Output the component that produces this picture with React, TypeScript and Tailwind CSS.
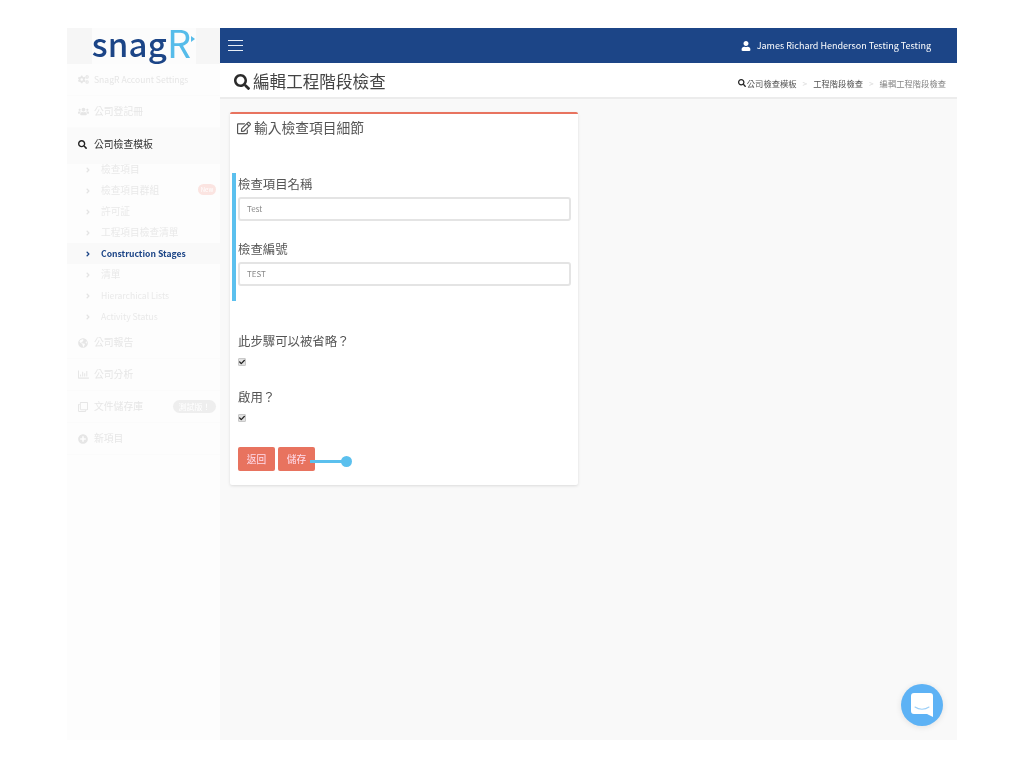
import { FaCogs, FaUsers, FaSearch, FaGlobeAmericas, FaRegChartBar, FaRegClone, FaPlusCircle, FaRegEdit, FaUser, FaCheck, FaAngleRight } from "react-icons/fa";

const font = "font-['Noto_Sans_CJK_TC','Noto_Sans',sans-serif]";

const subItems = ["檢查項目", "檢查項目群組", "許可証", "工程項目檢查清單", "Construction Stages", "清單", "Hierarchical Lists", "Activity Status"];

function SubItem({ label }: { label: string }) {
  const active = label === "Construction Stages";
  const latin = /^[A-Z]/.test(label);
  return (
    <div className={`relative flex h-[21px] items-center pl-[17px] ${latin ? "text-[8.6px]" : "text-[9.7px]"} ${active ? "bg-[#f9f9f9] font-semibold text-[#1c4587]" : "text-[#e9e9e9]"}`}>
      <FaAngleRight size={8} className={active ? "text-[#1c4587]" : "text-[#e4e4e4]"} />
      <span className="ml-[9px]">{label}</span>
      {label === "檢查項目群組" && (
        <span className="absolute right-[4px] top-[4px] flex h-[11px] w-[18px] items-center justify-center rounded-full bg-[#fbe4e1] text-[6px] text-white">New</span>
      )}
    </div>
  );
}

function NavItem({ icon, label, badge, small }: { icon: React.ReactNode; label: string; badge?: string; small?: boolean }) {
  return (
    <div className={`flex h-[32px] items-center border-b border-[#fbfbfb] pl-[11px] pr-[4px] text-[#e6e6e6] ${small ? "text-[8.6px]" : "text-[9.8px]"}`}>
      <span className="flex w-[16px] text-[#e6e6e6]">{icon}</span>
      <span>{label}</span>
      {badge && <span className="ml-auto flex h-[13px] w-[43px] items-center justify-center rounded-full bg-[#eeeeee] text-[8px] text-white">{badge}</span>}
    </div>
  );
}

function Checked() {
  return (
    <span className="flex h-[8px] w-[8px] items-center justify-center rounded-[1px] border border-[#c8c8c8] bg-[#e2e2e2]">
      <FaCheck size={6} className="text-[#222]" />
    </span>
  );
}

export default function App() {
  return (
    <div className={`${font} h-[768px] w-[1024px] overflow-hidden bg-white px-[67px] py-[28px] blur-[0.35px]`}>
      <div className="flex h-[712px] w-[890px]">
        {/* sidebar */}
        <aside className="w-[153px] shrink-0 bg-[#fdfdfd]">
          <div className="flex h-[36px] justify-center bg-[#f6f6f6]">
            <div className="flex w-[104px] items-end justify-center bg-[#fcfcfc] pb-[3px] text-[#1c4587]">
              <span className="text-[33px] font-medium leading-[36px] tracking-[0.2px]">snag</span>
              <span className="text-[38px] font-normal leading-[38px] text-[#56bcea]">R</span>
              <span className="mb-[19px] h-0 w-0 border-y-[3px] border-l-[4px] border-y-transparent border-l-[#56bcea]" />
            </div>
          </div>
          <NavItem icon={<FaCogs size={11} />} label="SnagR Account Settings" small />
          <NavItem icon={<FaUsers size={11} />} label="公司登記冊" />
          <div className="flex h-[36px] items-center bg-[#fafafa] pb-[4px] pl-[11px] text-[9.8px] text-[#333]">
            <FaSearch size={9} className="mr-[7px] text-[#222]" />
            公司檢查模板
          </div>
          <div className="relative -mt-[5px]">
            {subItems.map((s) => (
              <SubItem key={s} label={s} />
            ))}
          </div>
          <NavItem icon={<FaGlobeAmericas size={10} />} label="公司報告" />
          <NavItem icon={<FaRegChartBar size={11} />} label="公司分析" />
          <NavItem icon={<FaRegClone size={10} />} label="文件儲存庫" badge="測試版！" />
          <NavItem icon={<FaPlusCircle size={10} />} label="新項目" />
        </aside>

        {/* main column */}
        <main className="relative flex min-w-0 flex-1 flex-col bg-[#f9f9f9]">
          <header className="flex h-[35px] shrink-0 items-center bg-[#1c4587] pl-[8px] pr-[26px] text-white">
            <div className="flex w-[15px] flex-col gap-[3.5px]">
              <span className="h-[1.5px] bg-[#e8eef6]" />
              <span className="h-[1.5px] bg-[#e8eef6]" />
              <span className="h-[1.5px] bg-[#e8eef6]" />
            </div>
            <div className="ml-auto flex items-center text-[9px] text-white">
              <FaUser size={10} className="mr-[6px]" />
              <span className="blur-[0.6px]">James Richard Henderson Testing Testing</span>
            </div>
          </header>

          <div className="flex h-[36px] shrink-0 items-center border-b-2 border-[#ececec] bg-white pl-[14px] pr-[11px]">
            <FaSearch size={16} className="mt-[3px] text-[#2b2b2b]" />
            <h1 className="ml-[3px] pt-[2px] text-[16.6px] font-normal text-[#444]">編輯工程階段檢查</h1>
            <div className="ml-auto flex items-center pt-[6px] text-[8.3px] text-[#555]">
              <FaSearch size={8} className="mr-[1px] text-[#222]" />
              公司檢查模板
              <span className="mx-[6px] text-[#ddd]">&gt;</span>
              工程階段檢查
              <span className="mx-[6px] text-[#ddd]">&gt;</span>
              <span className="text-[#888]">編輯工程階段檢查</span>
            </div>
          </div>

          <div className="px-[10px] pt-[13px]">
            <section className="h-[373px] w-[348px] rounded-[2px] border-t-2 border-[#e8735f] bg-white pt-[3px] shadow-[0_1px_3px_rgba(0,0,0,0.12)]">
              <h2 className="flex h-[21px] items-center pl-[7px] text-[13.75px] font-normal text-[#555]">
                <FaRegEdit size={14} className="mr-[3px] text-[#555]" />
                輸入檢查項目細節
              </h2>
              <div className="ml-[2px] mt-[35px] h-[128px] w-[344px] border-l-[4px] border-[#5bc0ee] pl-[2px] pr-[5px] pt-[2px]">
                <label className="block h-[22px] text-[12.4px] leading-[18px] text-[#555]">檢查項目名稱</label>
                <div className="flex h-[24px] items-center rounded-[3px] border-2 border-[#e4e4e4] pl-[7px] text-[8px] text-[#888]">Test</div>
                <label className="mt-[19px] block h-[22px] text-[12.4px] leading-[18px] text-[#555]">檢查編號</label>
                <div className="flex h-[24px] items-center rounded-[3px] border-2 border-[#e4e4e4] pl-[7px] text-[8px] text-[#888]">TEST</div>
              </div>
              <div className="pl-[8px] pt-[29px]">
                <div className="h-[22px] text-[12.4px] leading-[22px] text-[#555]">此步驟可以被省略？</div>
                <div className="mt-[6px] flex"><Checked /></div>
                <div className="mt-[20px] h-[22px] text-[12.4px] leading-[22px] text-[#555]">啟用？</div>
                <div className="mt-[6px] flex"><Checked /></div>
                <div className="mt-[25px] flex gap-[3px]">
                  <button className="h-[24px] w-[37px] rounded-[2px] bg-[#e8735f] text-[9.7px] text-[#fde]">返回</button>
                  <button className="h-[24px] w-[37px] rounded-[2px] bg-[#e8735f] text-[9.7px] text-[#fde]">儲存</button>
                </div>
              </div>
            </section>
          </div>

          {/* annotation */}
          <div className="absolute left-[90px] top-[432px] h-[3px] w-[33px] bg-[#5bc0ee]" />
          <div className="absolute left-[120.5px] top-[428px] h-[11px] w-[11px] rounded-full bg-[#5bc0ee]" />

          {/* chat launcher */}
          <div className="absolute left-[681px] top-[656px] flex h-[42px] w-[42px] items-center justify-center rounded-full bg-[#5db2f5] shadow-[0_1px_6px_rgba(0,0,0,0.1)]">
            <svg width="22" height="24" viewBox="0 0 22 24">
              <path d="M3 0h16a3 3 0 0 1 3 3v21l-6-3H3a3 3 0 0 1-3-3V3a3 3 0 0 1 3-3z" fill="white" />
              <path d="M4 14c4 3 10 3 14 0" stroke="#9ccff8" strokeWidth="1.1" fill="none" strokeLinecap="round" />
            </svg>
          </div>
        </main>
      </div>
    </div>
  );
}
